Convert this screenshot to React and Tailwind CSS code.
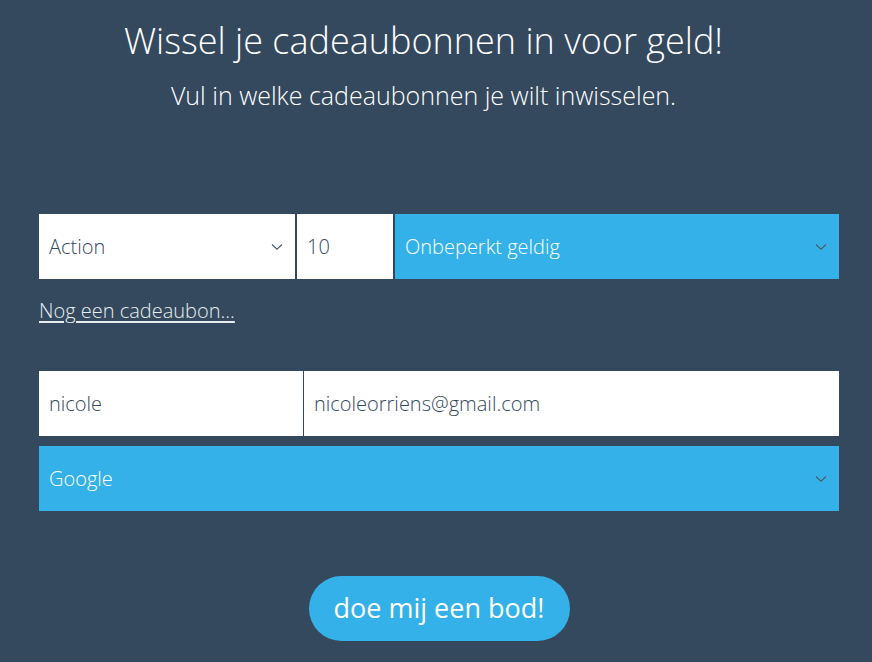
import React from "react";

function Chevron() {
  return (
    <svg width="12" height="8" viewBox="0 0 12 8" fill="none" className="shrink-0">
      <path d="M1 1.5 L6 6.2 L11 1.5" stroke="#4a5a6a" strokeWidth="1.1" />
    </svg>
  );
}

export default function App() {
  return (
    <div
      className="min-h-[662px] w-full bg-[#34495e] text-white"
      style={{ fontFamily: '"Open Sans", "Liberation Sans", sans-serif' }}
    >
      <div className="w-[847px] pt-[16px] text-center">
        <h1 className="text-[36px] font-light leading-[50px]">Wissel je cadeaubonnen in voor geld!</h1>
        <p className="mt-[12px] text-[25px] font-light leading-[34px]">Vul in welke cadeaubonnen je wilt inwisselen.</p>
      </div>

      <div className="ml-[39px] mt-[102px] w-[800px]">
        <div className="flex h-[65px] gap-[2px]">
          <div className="flex w-[256px] items-center justify-between bg-white pl-[10px] pr-[12px] text-[20px] font-light text-[#34495e]">
            <span>Action</span>
            <Chevron />
          </div>
          <div className="flex w-[96px] items-center bg-white pl-[10px] text-[20px] font-light text-[#34495e]">
            <span>10</span>
          </div>
          <div className="flex flex-1 items-center justify-between bg-[#35b1e9] pl-[10px] pr-[12px] text-[20px] font-light text-white">
            <span>Onbeperkt geldig</span>
            <Chevron />
          </div>
        </div>

        <div className="mt-[17px] h-[30px]">
          <a href="#" className="text-[20px] font-light text-[#e8edf2] underline underline-offset-[3px]">
            Nog een cadeaubon...
          </a>
        </div>

        <div className="mt-[45px] flex h-[65px] gap-[1px]">
          <div className="flex w-[264px] items-center bg-white pl-[10px] text-[20px] font-light text-[#34495e]">
            <span>nicole</span>
          </div>
          <div className="flex flex-1 items-center bg-white pl-[10px] text-[20px] font-light text-[#34495e]">
            <span>nicoleorriens@gmail.com</span>
          </div>
        </div>

        <div className="mt-[10px] flex h-[65px] items-center justify-between bg-[#35b1e9] pl-[10px] pr-[12px] text-[20px] font-light text-white">
          <span>Google</span>
          <Chevron />
        </div>

        <div className="mt-[65px] flex justify-center">
          <button className="h-[65px] w-[261px] rounded-full bg-[#35b1e9] text-[27px] font-normal text-white">
            doe mij een bod!
          </button>
        </div>
      </div>
    </div>
  );
}
